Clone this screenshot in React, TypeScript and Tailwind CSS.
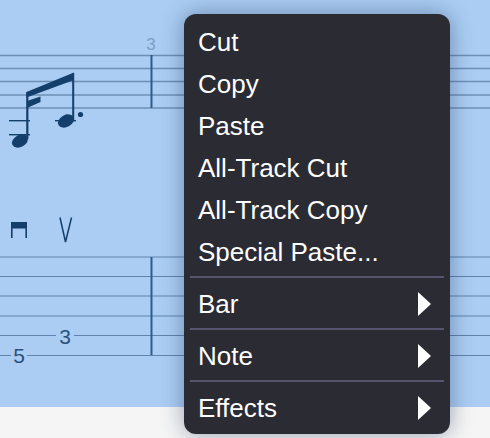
import React from "react";

const copyItems = ["Cut", "Copy", "Paste", "All-Track Cut", "All-Track Copy", "Special Paste..."];
const subMenus = ["Bar", "Note", "Effects"];

const Score = () => (
  <svg width="490" height="407" viewBox="0 0 490 407" className="block">
    <g stroke="#6f8fb5" strokeWidth="1.3">
      {[55.5, 68.5, 81.5, 95, 108].map((y) => (
        <line key={y} x1="0" x2="490" y1={y} y2={y} />
      ))}
    </g>
    <g stroke="#5f83ad" strokeWidth="1.1">
      {[257, 276.5, 296, 316, 335.5, 355.5].map((y) => (
        <line key={y} x1="0" x2="490" y1={y} y2={y} />
      ))}
    </g>
    <text x="151" y="50" textAnchor="middle" fontSize="17" fill="#7f9dbf" fontFamily="'Liberation Sans', sans-serif">3</text>
    <line x1="151.5" x2="151.5" y1="55" y2="108" stroke="#2f5a85" strokeWidth="2" />
    <line x1="151.5" x2="151.5" y1="257" y2="355" stroke="#2f5a85" strokeWidth="2" />

    <g fill="#153f6b" stroke="none">
      <rect x="26.2" y="92" width="2.2" height="47" />
      <rect x="72.2" y="73" width="2" height="48" />
      <polygon points="26.5,92 74,72.5 74,80 26.5,97.5" />
      <polygon points="27,101 40.5,96.500 40.5,102 27,108" />
      <ellipse cx="20" cy="141" rx="8.5" ry="6" transform="rotate(-28 20 141)" />
      <ellipse cx="66" cy="121" rx="8.5" ry="6" transform="rotate(-28 66 121)" />
      <circle cx="80.5" cy="114.5" r="2.6" />
      <rect x="9" y="120" width="21" height="1.4" />
      <rect x="9" y="134" width="21" height="1.4" />
      <rect x="55" y="120" width="21" height="1.4" />
      <path d="M11 222h16v16h-1.600v-9.500h-12.800v9.500h-1.600z" />
    </g>
    <path d="M60 217.500 L65.500 242 L71.500 217.500" fill="none" stroke="#153f6b" strokeWidth="1.500" />

    <rect x="56" y="326" width="18" height="20" fill="#abcdf3" />
    <rect x="11" y="346" width="16" height="20" fill="#abcdf3" />
    <text x="65" y="344" textAnchor="middle" fontSize="21" fill="#2a527c" fontFamily="'Liberation Sans', sans-serif">3</text>
    <text x="19" y="362.800" textAnchor="middle" fontSize="21" fill="#2a527c" fontFamily="'Liberation Sans', sans-serif">5</text>
  </svg>
);

const Arrow = () => (
  <svg width="13" height="24" viewBox="0 0 13 24">
    <polygon points="0,0 13,12 0,24" fill="#ffffff" />
  </svg>
);

const Separator = () => <div className="mx-[6px] h-[2px] bg-[#565470]" />;

export default function App() {
  return (
    <div className="relative w-[490px] h-[438px] overflow-hidden bg-[#f5f5f5] font-['Liberation_Sans',sans-serif]">
      <div className="h-[407px] bg-[#abcdf3]">
        <Score />
      </div>

      <div className="absolute left-[184px] top-[14px] w-[266px] h-[420px] rounded-[12px] bg-[#2b2b33] pt-[7px] text-[26px] text-white shadow-[0_0_22px_rgba(30,50,90,0.45)]">
        <div className="mb-[3px] flex flex-col">
          {copyItems.map((label) => (
            <div key={label} className="flex h-[42px] items-center px-[14px]">
              {label}
            </div>
          ))}
        </div>
        {subMenus.map((label) => (
          <div key={label}>
            <Separator />
            <div className="flex h-[50px] items-center justify-between pl-[14px] pr-[19px] pt-[2px]">
              <span>{label}</span>
              <Arrow />
            </div>
          </div>
        ))}
      </div>
    </div>
  );
}
